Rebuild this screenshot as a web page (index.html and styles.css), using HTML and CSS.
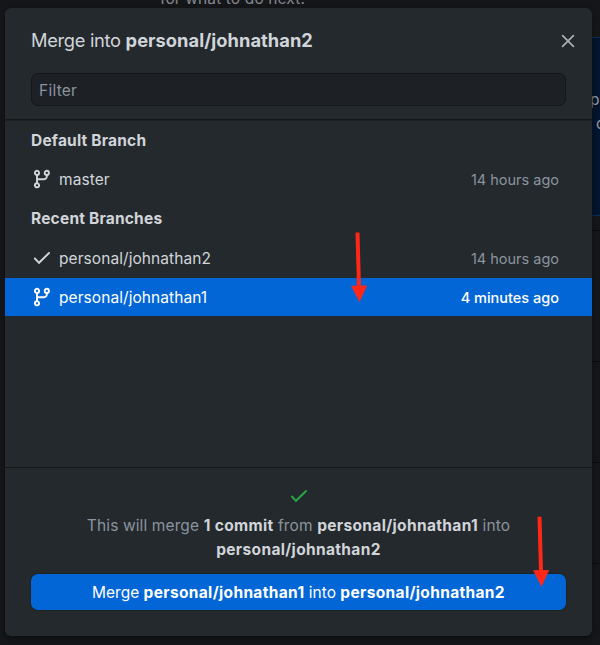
FILE: index.html
```
<!DOCTYPE html>
<html lang="en">
<head>
<meta charset="utf-8">
<title>Merge branch</title>
<link rel="stylesheet" href="styles.css">
</head>
<body>
<svg class="symbols" aria-hidden="true">
  <symbol id="branch" viewBox="0 0 18 20">
    <g fill="none" stroke="currentColor" stroke-width="1.9">
      <circle cx="4" cy="3.9" r="2.1"/><circle cx="13.8" cy="3.9" r="2.1"/><circle cx="4" cy="16.3" r="2.1"/>
      <path d="M4 6v8.2M4 10.2h7.2a2.6 2.6 0 0 0 2.6-2.6V6"/>
    </g>
  </symbol>
  <symbol id="check" viewBox="0 0 18 14">
    <path d="M1.9 7.5l4.1 4.3L16 2" fill="none" stroke="currentColor" stroke-width="1.9" stroke-linecap="round"/>
  </symbol>
</svg>
<div class="backdrop">
  <p class="backdrop-top">for what to do next.</p>
  <div class="backdrop-side">
    <div class="card">p<br><span>c</span></div>
    <div class="line l1"></div><div class="line l2"></div><div class="line l3"></div><div class="line l4"></div>
  </div>
</div>
<main class="dialog">
  <header>
    <div class="title-row">
      <h1>Merge into <b>personal/johnathan2</b></h1>
      <svg class="close" viewBox="0 0 14 14"><path d="M1.6 1.6l10.8 10.8M12.4 1.6L1.6 12.4" fill="none" stroke="currentColor" stroke-width="1.8" stroke-linecap="round"/></svg>
    </div>
    <div class="filter">Filter</div>
  </header>
  <section class="list">
    <h2>Default Branch</h2>
    <div class="row"><svg><use href="#branch"/></svg><span>master</span><time>14 hours ago</time></div>
    <h2>Recent Branches</h2>
    <div class="row current"><svg class="check"><use href="#check"/></svg><span>personal/johnathan2</span><time>14 hours ago</time></div>
    <div class="row selected"><svg><use href="#branch"/></svg><span>personal/johnathan1</span><time>4 minutes ago</time></div>
  </section>
  <footer>
    <svg class="ok"><use href="#check"/></svg>
    <p>This will merge <b>1 commit</b> from <b>personal/johnathan1</b> into<br><b>personal/johnathan2</b></p>
    <button>Merge <b>personal/johnathan1</b> into <b>personal/johnathan2</b></button>
  </footer>
</main>
<svg class="arrow first" viewBox="0 0 18 72"><path d="M7.5 1.5l1.5 55" stroke="#ff2717" stroke-width="4"/><path d="M1 54.8L17.2 54.4 9.5 71z" fill="#ff2717"/></svg>
<svg class="arrow second" viewBox="0 0 18 72"><path d="M7.5 1.8l1.5 55" stroke="#ff2717" stroke-width="4"/><path d="M1 55.3L17.2 54.9 9.5 71.7z" fill="#ff2717"/></svg>
</body>
</html>
```
FILE: styles.css
```
* { box-sizing: border-box; }
body { margin: 0; width: 600px; height: 645px; overflow: hidden; position: relative; background: #141619; color: #d1d5da; font-family: Inter, "Liberation Sans", sans-serif; font-size: 15.5px; padding: 8px 8px 9px 5px; }
h1, h2, p { margin: 0; }
b { font-weight: 700; letter-spacing: .34px; }
.symbols { position: absolute; width: 0; height: 0; }
.backdrop { position: absolute; inset: 0; overflow: hidden; }
.backdrop-top { position: absolute; left: 160px; top: -11px; line-height: 20px; color: #85898d; white-space: nowrap; letter-spacing: .12px; }
.backdrop-side { position: absolute; left: 590px; top: 0; width: 10px; height: 645px; }
.card { margin-top: 37px; height: 179px; background: #02152f; border: solid #06305a; border-width: 1px 0; padding-top: 50px; line-height: 24px; color: #96999f; }
.card span { margin-left: 6px; }
.line { height: 1px; background: #090a0b; position: absolute; width: 10px; }
.l1 { top: 230px; } .l2 { top: 361px; } .l3 { top: 462px; } .l4 { top: 563px; }
.dialog { position: relative; height: 628px; width: 587px; background: #24292d; border-radius: 6px; box-shadow: 0 2px 5px #0a0b0dcc; display: flex; flex-direction: column; overflow: hidden; }
header { height: 112px; border-bottom: 1px solid #141618; box-shadow: 0 1px #1c2023; padding: 19px 26px 0; flex: none; }
.title-row { display: flex; justify-content: space-between; align-items: center; height: 27px; margin-right: -9px; }
h1 { font-size: 18.3px; font-weight: 400; letter-spacing: -.3px; white-space: nowrap; padding-bottom: 2px; }
h1 b { letter-spacing: .04px; }
.close { width: 14px; height: 14px; color: #a7adb4; }
.filter { margin-top: 19px; height: 33px; border: 1px solid #141618; border-radius: 7px; background: #1d2125; color: #8b949e; padding: 0 7px; line-height: 33px; letter-spacing: .25px; }
.list { height: 347px; flex: none; padding-top: .5px; }
h2 { height: 39.25px; line-height: 39.25px; font-size: 15.5px; font-weight: 700; letter-spacing: .2px; padding-left: 26px; }
.row { height: 39.25px; padding: 0 33px 0 28px; display: flex; align-items: center; letter-spacing: .07px; }
.row svg { width: 18px; height: 20px; margin-right: 8px; flex: none; }
.row .check { height: 14px; }
.current { padding-top: 1px; }
time { margin-left: auto; color: #8b949e; font-size: 14.5px; letter-spacing: 0; }
.selected { background: #0366d6; color: #fff; height: 38px; padding-top: 1px; }
.selected time { color: #fff; font-weight: 500; }
footer { flex: 1; border-top: 1px solid #141618; padding: 21px 26px 0; display: flex; flex-direction: column; align-items: center; }
.ok { width: 18px; height: 14px; color: #28a745; }
footer p { margin-top: 11px; text-align: center; line-height: 23.5px; color: #8b949e; white-space: nowrap; letter-spacing: .12px; }
footer p b { color: #d1d5da; letter-spacing: .34px; }
button { margin-top: 13px; height: 36px; width: 535px; border: 0; border-radius: 7px; background: #0366d6; color: #fff; font: inherit; white-space: nowrap; box-shadow: 0 0 0 1px #202326; padding: 0; }
.arrow { position: absolute; width: 18px; height: 72px; }
.first { left: 350px; top: 231px; }
.second { left: 532px; top: 515px; }
```
